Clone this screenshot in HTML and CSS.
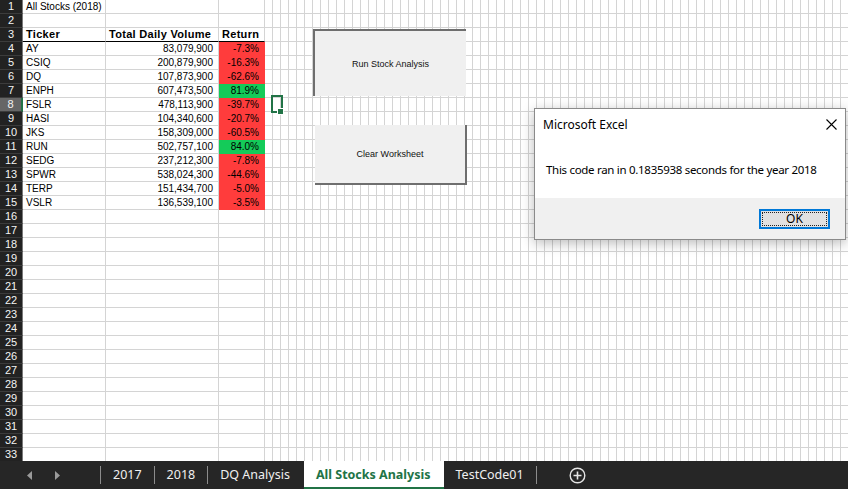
FILE: index.html
```html
<!DOCTYPE html>
<html>
<head>
<meta charset="utf-8">
<link rel="stylesheet" href="styles.css">
</head>
<body>
<div class="sheet">
  <div class="row"><div class="rh">1</div><div class="c ca">All Stocks (2018)</div><div class="c cb"></div><div class="c cc"></div><div class="fill"></div></div>
  <div class="row"><div class="rh">2</div><div class="c ca"></div><div class="c cb"></div><div class="c cc"></div><div class="fill"></div></div>
  <div class="row"><div class="rh">3</div><div class="c ca hdr">Ticker</div><div class="c cb hdr">Total Daily Volume</div><div class="c cc hdr">Return</div><div class="fill"></div></div>
  <div class="row"><div class="rh">4</div><div class="c ca">AY</div><div class="c cb">83,079,900</div><div class="c cc neg">-7.3%</div><div class="fill"></div></div>
  <div class="row"><div class="rh">5</div><div class="c ca">CSIQ</div><div class="c cb">200,879,900</div><div class="c cc neg">-16.3%</div><div class="fill"></div></div>
  <div class="row"><div class="rh">6</div><div class="c ca">DQ</div><div class="c cb">107,873,900</div><div class="c cc neg">-62.6%</div><div class="fill"></div></div>
  <div class="row"><div class="rh">7</div><div class="c ca">ENPH</div><div class="c cb">607,473,500</div><div class="c cc pos">81.9%</div><div class="fill"></div></div>
  <div class="row"><div class="rh cur">8</div><div class="c ca">FSLR</div><div class="c cb">478,113,900</div><div class="c cc neg">-39.7%</div><div class="fill"></div></div>
  <div class="row"><div class="rh">9</div><div class="c ca">HASI</div><div class="c cb">104,340,600</div><div class="c cc neg">-20.7%</div><div class="fill"></div></div>
  <div class="row"><div class="rh">10</div><div class="c ca">JKS</div><div class="c cb">158,309,000</div><div class="c cc neg">-60.5%</div><div class="fill"></div></div>
  <div class="row"><div class="rh">11</div><div class="c ca">RUN</div><div class="c cb">502,757,100</div><div class="c cc pos">84.0%</div><div class="fill"></div></div>
  <div class="row"><div class="rh">12</div><div class="c ca">SEDG</div><div class="c cb">237,212,300</div><div class="c cc neg">-7.8%</div><div class="fill"></div></div>
  <div class="row"><div class="rh">13</div><div class="c ca">SPWR</div><div class="c cb">538,024,300</div><div class="c cc neg">-44.6%</div><div class="fill"></div></div>
  <div class="row"><div class="rh">14</div><div class="c ca">TERP</div><div class="c cb">151,434,700</div><div class="c cc neg">-5.0%</div><div class="fill"></div></div>
  <div class="row"><div class="rh">15</div><div class="c ca">VSLR</div><div class="c cb">136,539,100</div><div class="c cc neg">-3.5%</div><div class="fill"></div></div>
  <div class="row"><div class="rh">16</div><div class="c ca"></div><div class="c cb"></div><div class="c cc"></div><div class="fill"></div></div>
  <div class="row"><div class="rh">17</div><div class="c ca"></div><div class="c cb"></div><div class="c cc"></div><div class="fill"></div></div>
  <div class="row"><div class="rh">18</div><div class="c ca"></div><div class="c cb"></div><div class="c cc"></div><div class="fill"></div></div>
  <div class="row"><div class="rh">19</div><div class="c ca"></div><div class="c cb"></div><div class="c cc"></div><div class="fill"></div></div>
  <div class="row"><div class="rh">20</div><div class="c ca"></div><div class="c cb"></div><div class="c cc"></div><div class="fill"></div></div>
  <div class="row"><div class="rh">21</div><div class="c ca"></div><div class="c cb"></div><div class="c cc"></div><div class="fill"></div></div>
  <div class="row"><div class="rh">22</div><div class="c ca"></div><div class="c cb"></div><div class="c cc"></div><div class="fill"></div></div>
  <div class="row"><div class="rh">23</div><div class="c ca"></div><div class="c cb"></div><div class="c cc"></div><div class="fill"></div></div>
  <div class="row"><div class="rh">24</div><div class="c ca"></div><div class="c cb"></div><div class="c cc"></div><div class="fill"></div></div>
  <div class="row"><div class="rh">25</div><div class="c ca"></div><div class="c cb"></div><div class="c cc"></div><div class="fill"></div></div>
  <div class="row"><div class="rh">26</div><div class="c ca"></div><div class="c cb"></div><div class="c cc"></div><div class="fill"></div></div>
  <div class="row"><div class="rh">27</div><div class="c ca"></div><div class="c cb"></div><div class="c cc"></div><div class="fill"></div></div>
  <div class="row"><div class="rh">28</div><div class="c ca"></div><div class="c cb"></div><div class="c cc"></div><div class="fill"></div></div>
  <div class="row"><div class="rh">29</div><div class="c ca"></div><div class="c cb"></div><div class="c cc"></div><div class="fill"></div></div>
  <div class="row"><div class="rh">30</div><div class="c ca"></div><div class="c cb"></div><div class="c cc"></div><div class="fill"></div></div>
  <div class="row"><div class="rh">31</div><div class="c ca"></div><div class="c cb"></div><div class="c cc"></div><div class="fill"></div></div>
  <div class="row"><div class="rh">32</div><div class="c ca"></div><div class="c cb"></div><div class="c cc"></div><div class="fill"></div></div>
  <div class="row"><div class="rh">33</div><div class="c ca"></div><div class="c cb"></div><div class="c cc"></div><div class="fill"></div></div>

  <div class="sel"><div class="handle"></div></div>

  <div class="btn run">Run Stock Analysis</div>
  <div class="btn clear">Clear Worksheet</div>

  <div class="dlg">
    <div class="dlg-title">
      <span>Microsoft Excel</span>
      <svg class="xicon" width="11" height="11" viewBox="0 0 11 11"><path d="M0.5 0.5 L10.5 10.5 M10.5 0.5 L0.5 10.5" stroke="#000" stroke-width="1.1" fill="none"/></svg>
    </div>
    <div class="dlg-body">This code ran in 0.1835938 seconds for the year 2018</div>
    <div class="dlg-foot"><div class="ok">OK</div></div>
  </div>
</div>
<div class="tabs">
  <div class="nav">
    <svg class="arrow" width="6" height="9" viewBox="0 0 6 9"><polygon points="5,0 5,9 0,4.5" fill="#9a9a9a"/></svg>
    <svg class="arrow" width="6" height="9" viewBox="0 0 6 9"><polygon points="0,0 0,9 5,4.5" fill="#9a9a9a"/></svg>
  </div>
  <div class="sep"></div>
  <div class="tab">2017</div>
  <div class="sep"></div>
  <div class="tab">2018</div>
  <div class="sep"></div>
  <div class="tab">DQ Analysis</div>
  <div class="tab active">All Stocks Analysis</div>
  <div class="tab">TestCode01</div>
  <div class="sep"></div>
  <div class="plus">
    <svg width="17" height="17" viewBox="0 0 17 17"><circle cx="8.5" cy="8.5" r="7.3" stroke="#e6e6e6" stroke-width="1.4" fill="none"/><path d="M8.5 4.5 V12.5 M4.5 8.5 H12.5" stroke="#e6e6e6" stroke-width="1.6"/></svg>
  </div>
</div>
</body>
</html>
```
FILE: styles.css
```css
html, body {
  margin: 0;
  padding: 0;
}
body {
  width: 848px;
  height: 489px;
  overflow: hidden;
  background: #fff;
  font-family: "Liberation Sans", Arial, sans-serif;
}
.sheet {
  position: relative;
  height: 461px;
  overflow: hidden;
}
.row {
  display: flex;
  height: 14px;
}
.rh {
  flex: none;
  box-sizing: border-box;
  width: 23px;
  height: 14px;
  background: #222;
  color: #f4f4f4;
  border-right: 1px solid #7a7a7a;
  border-bottom: 1px solid #3c3c3c;
  font-size: 11px;
  line-height: 13px;
  text-align: center;
}
.rh.cur {
  background: #666;
  border-right: 2px solid #217346;
}
.c {
  flex: none;
  box-sizing: border-box;
  height: 14px;
  border-right: 1px solid #d4d4d4;
  border-bottom: 1px solid #d4d4d4;
  font-size: 10px;
  line-height: 13px;
  white-space: nowrap;
  color: #000;
}
.ca {
  width: 83px;
  padding-left: 3px;
}
.cb {
  width: 113px;
  text-align: right;
  padding-right: 5px;
}
.cc {
  width: 46px;
  text-align: right;
  padding-right: 5px;
}
.hdr {
  font-weight: bold;
  font-size: 11px;
  letter-spacing: 0.3px;
  text-align: left;
  padding-left: 3px;
  border-bottom-color: #000;
}
.cb.hdr {
  padding-left: 3px;
}
.neg {
  background: #ff3c3c;
  border-bottom-color: #ff3c3c;
  border-right-color: #ff3c3c;
}
.pos {
  background: #14cb59;
  border-bottom-color: #14cb59;
  border-right-color: #14cb59;
}
.fill {
  flex: 1;
  box-sizing: border-box;
  height: 14px;
  border-bottom: 1px solid #d4d4d4;
  background: repeating-linear-gradient(to right, transparent 0 7px, #d4d4d4 7px 8px);
}
.sel {
  position: absolute;
  left: 271px;
  top: 95px;
  width: 12px;
  height: 18px;
  box-sizing: border-box;
  border: 2px solid #217346;
}
.handle {
  position: absolute;
  right: -3px;
  bottom: -4px;
  width: 5px;
  height: 5px;
  background: #217346;
  border: 1px solid #fff;
}
.btn {
  position: absolute;
  box-sizing: border-box;
  background: #f0f0f0;
  display: flex;
  align-items: center;
  justify-content: center;
  font-family: "Liberation Sans", Arial, sans-serif;
  font-size: 9px;
  color: #111;
}
.run {
  left: 313px;
  top: 29px;
  width: 153px;
  height: 67px;
  border-top: 2px solid #6e6e6e;
  border-left: 2px solid #6e6e6e;
}
.clear {
  left: 315px;
  top: 125px;
  width: 152px;
  height: 60px;
  border-right: 2px solid #6e6e6e;
  border-bottom: 2px solid #6e6e6e;
}
.dlg {
  position: absolute;
  left: 534px;
  top: 108px;
  width: 312px;
  height: 132px;
  box-sizing: border-box;
  border: 1px solid #8a8a8a;
  background: #fff;
  box-shadow: 0 3px 12px rgba(0, 0, 0, 0.28);
  display: flex;
  flex-direction: column;
  font-family: "Noto Sans", "Open Sans", sans-serif;
  color: #000;
}
.dlg-title {
  height: 31px;
  display: flex;
  align-items: center;
  justify-content: space-between;
  padding: 0 8px 0 8px;
  font-size: 12px;
}
.xicon {
  display: block;
}
.dlg-body {
  flex: 1;
  display: flex;
  align-items: center;
  padding-left: 11px;
  font-size: 11.5px;
  letter-spacing: -0.3px;
}
.dlg-foot {
  height: 41px;
  background: #f0f0f0;
  display: flex;
  align-items: center;
  justify-content: flex-end;
  padding-right: 15px;
}
.ok {
  position: relative;
  width: 71px;
  height: 20px;
  box-sizing: border-box;
  border: 2px solid #0078d7;
  background: #e1e1e1;
  display: flex;
  align-items: center;
  justify-content: center;
  font-size: 12px;
}
.ok::after {
  content: "";
  position: absolute;
  left: 1px;
  top: 1px;
  right: 1px;
  bottom: 1px;
  border: 1px dotted #222;
}
.tabs {
  height: 28px;
  background: #262626;
  display: flex;
  align-items: stretch;
  color: #f0f0f0;
  font-family: "Noto Sans", "Open Sans", sans-serif;
  font-size: 12.5px;
}
.nav {
  width: 100px;
  display: flex;
  align-items: center;
  gap: 22px;
  padding-left: 27px;
  box-sizing: border-box;
}
.arrow {
  display: block;
}
.sep {
  width: 1px;
  background: #8c8c8c;
  margin: 5px 0 5px 0;
}
.tab {
  display: flex;
  align-items: center;
  padding: 0 12px 1px 12px;
}
.tab.active {
  background: #fff;
  color: #217346;
  font-weight: bold;
  padding: 0 13px 0 12px;
  border-bottom: 2px solid #217346;
  margin-left: 2px;
}
.plus {
  display: flex;
  align-items: center;
  margin-left: 32px;
}
.plus svg {
  display: block;
}
```
